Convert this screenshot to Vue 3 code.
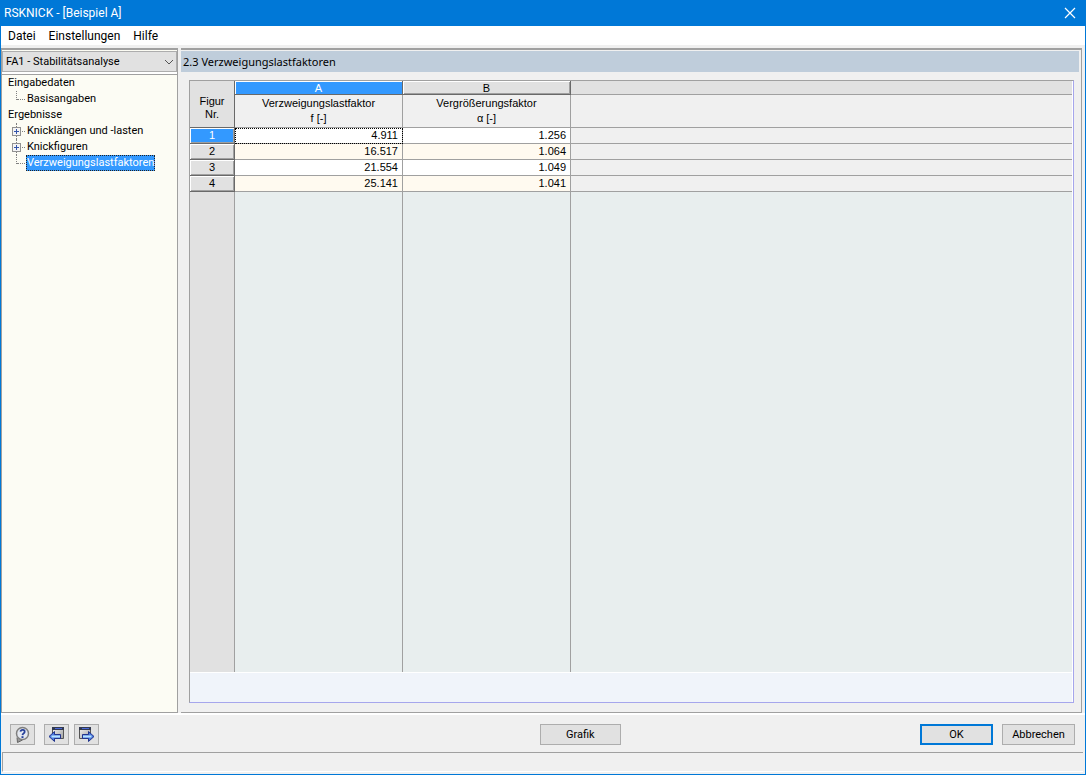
<script setup>
const menus = ['Datei', 'Einstellungen', 'Hilfe']
const rows = [
  ['4.911', '1.256'],
  ['16.517', '1.064'],
  ['21.554', '1.049'],
  ['25.141', '1.041'],
]
</script>

<template>
  <div class="window">
    <header class="titlebar">
      <h1>RSKNICK - [Beispiel A]</h1>
      <button class="close" aria-label="Schließen">
        <svg width="12" height="12" viewBox="0 0 12 12"><path d="M1 1L11 11M11 1L1 11" stroke="#fff" stroke-width="1.2" /></svg>
      </button>
    </header>
    <nav class="menubar">
      <button v-for="m in menus" :key="m">{{ m }}</button>
    </nav>
    <div class="body">
      <aside class="side">
        <div class="combo">
          <select aria-label="Fall">
            <option>FA1 - Stabilitätsanalyse</option>
          </select>
          <svg class="chevron" width="10" height="6" viewBox="0 0 10 6"><path d="M1 1L5 5L9 1" fill="none" stroke="#555" /></svg>
        </div>
        <ul class="tree">
          <li><a href="#">Eingabedaten</a></li>
          <li class="child last"><i class="branch"></i><a href="#">Basisangaben</a></li>
          <li><a href="#">Ergebnisse</a></li>
          <li class="child"><i class="branch"></i><button class="plus" aria-label="Knicklängen öffnen"></button><a href="#">Knicklängen und -lasten</a></li>
          <li class="child"><i class="branch"></i><button class="plus" aria-label="Knickfiguren öffnen"></button><a href="#">Knickfiguren</a></li>
          <li class="child last"><i class="branch"></i><a href="#" class="selected">Verzweigungslastfaktoren</a></li>
        </ul>
      </aside>
      <main class="main">
        <h2>2.3 Verzweigungslastfaktoren</h2>
        <div class="grid">
          <table>
            <colgroup><col class="c-no"><col class="c-val"><col class="c-val"><col></colgroup>
            <thead>
              <tr class="letters">
                <th rowspan="2" class="corner">Figur<br>Nr.</th>
                <th class="active">A</th>
                <th class="letter">B</th>
                <th class="blank"></th>
              </tr>
              <tr class="names">
                <th>Verzweigungslastfaktor<br>f [-]</th>
                <th>Vergrößerungsfaktor<br>α [-]</th>
                <th></th>
              </tr>
            </thead>
            <tbody>
              <tr v-for="(r, i) in rows" :key="i" class="row">
                <th :class="{ current: i === 0 }">{{ i + 1 }}</th>
                <td :class="{ focus: i === 0 }">{{ r[0] }}</td>
                <td>{{ r[1] }}</td>
                <td class="rest"></td>
              </tr>
              <tr class="filler"><th></th><td></td><td></td><td class="rest"></td></tr>
            </tbody>
          </table>
          <div class="note"></div>
        </div>
      </main>
    </div>
    <footer class="actions">
      <div class="tools">
        <button class="tool" aria-label="Hilfe">
          <svg width="18" height="18" viewBox="0 0 18 18">
            <path d="M3 11.500L3.500 16.500L8.500 14" fill="#999" stroke="#666" />
            <circle cx="8.500" cy="7.500" r="6" fill="#e4e8f0" stroke="#808080" stroke-width="1.500" />
            <path d="M6.500 5.700C6.800 3 11.200 3.200 10.600 6C10.300 7.500 8.800 7.300 8.500 9.200" fill="none" stroke="#26409a" stroke-width="1.800" />
            <path d="M7.500 10.200H9.500V12H7.500Z" fill="#26409a" />
          </svg>
        </button>
        <button class="tool gap" aria-label="Vorherige Maske">
          <svg width="18" height="18" viewBox="0 0 18 18">
            <defs><linearGradient id="pane" x2="1" y2="1"><stop stop-color="#f4f4f4" /><stop offset="1" stop-color="#a0a0a0" /></linearGradient></defs>
            <path d="M4.500 1.500H15.500V12.500H4.500Z" fill="url(#pane)" stroke="#555" />
            <path d="M4 1H16V4H4Z" fill="#333a50" /><path d="M7 2H14V3H7Z" fill="#4a68d8" />
            <path d="M1 10.500L6.500 5.500V8.500H12.500V12.500H6.500V15.500Z" fill="#4a7ae0" stroke="#22348c" />
            <path d="M3.500 10.500H12" stroke="#b8e4ff" stroke-width="2" />
          </svg>
        </button>
        <button class="tool" aria-label="Nächste Maske">
          <svg width="18" height="18" viewBox="0 0 18 18">
            <path d="M1.500 1.500H12.500V12.500H1.500Z" fill="url(#pane)" stroke="#555" />
            <path d="M1 1H13V4H1Z" fill="#333a50" /><path d="M4 2H11V3H4Z" fill="#4a68d8" />
            <path d="M16 10.500L10.500 5.500V8.500H4.500V12.500H10.500V15.500Z" fill="#4a7ae0" stroke="#22348c" />
            <path d="M5 10.500H13.500" stroke="#b8e4ff" stroke-width="2" />
          </svg>
        </button>
      </div>
      <button class="btn center">Grafik</button>
      <div class="right">
        <button class="btn ok">OK</button>
        <button class="btn">Abbrechen</button>
      </div>
    </footer>
    <div class="status"></div>
  </div>
</template>

<style>
body { margin: 0; background: #f0f0f0; }
</style>

<style scoped>
.window { box-sizing: border-box; height: 100vh; display: flex; flex-direction: column; background: #f0f0f0; border: 1px solid #0078d7; border-top: 0; font: 11px/16px Roboto, sans-serif; color: #000; }
button, select { font: inherit; color: inherit; padding: 0; margin: 0; border: 0; background: none; border-radius: 0; }
h1, h2 { margin: 0; font-weight: 400; }
a { color: inherit; text-decoration: none; }
.titlebar { flex: none; height: 26px; background: #0078d7; color: #fff; display: flex; align-items: center; justify-content: space-between; padding: 0 9px 0 3px; }
.titlebar h1 { font-size: 12px; }
.close { display: flex; }
.menubar { flex: none; height: 18px; padding: 1px 7px 0; background: #fff; display: flex; gap: 13px; align-items: center; font-size: 12px; }
.body { flex: 1; min-height: 0; display: flex; gap: 3px; margin-top: 3px; padding-right: 3px; border-bottom: 2px solid #fff; }
.side { box-sizing: border-box; width: 177px; border: 1px solid #a0a0a0; border-top-width: 2px; display: flex; flex-direction: column; background: #fcfcf4; }
.combo { position: relative; margin: 1px 0 0; padding-bottom: 2px; background: #fff; border-bottom: 1px solid #a0a0a0; }
.combo select { display: block; box-sizing: border-box; width: 100%; height: 21px; appearance: none; background: #e1e1e1; border: 1px solid #adadad; padding: 0 3px; }
.chevron { position: absolute; right: 3px; top: 8px; }
.tree { list-style: none; margin: 0; padding: 0 0 0 4px; }
.tree li { display: flex; height: 16px; align-items: center; position: relative; padding-left: 1px; }
.tree li.child { padding-left: 20px; }
.tree a { height: 14px; line-height: 14px; border: 1px solid transparent; white-space: nowrap; }
.tree a.selected { background: #3399ff; color: #fff; border: 1px dotted #222; }
.branch { position: absolute; left: 10px; top: 0; width: 9px; height: 16px; border-left: 1px dotted #808080; box-sizing: border-box; }
.branch::after { content: ""; position: absolute; left: 0; right: 0; top: 8px; border-top: 1px dotted #808080; }
.last .branch { height: 9px; }
.plus { position: absolute; left: 6px; top: 4px; box-sizing: content-box; width: 7px; height: 7px; border: 1px solid #919191; background: linear-gradient(#35a, #35a) center / 5px 1px no-repeat, linear-gradient(#35a, #35a) center / 1px 5px no-repeat, #f4f4f4; }
.main { flex: 1; min-width: 0; box-sizing: border-box; display: flex; flex-direction: column; border: 1px solid #a0a0a0; border-left: 0; border-top-width: 2px; padding: 1px 2px 9px 0; }
.main h2 { background: #bfcddb; height: 21px; font: 11px/21px "Noto Sans", sans-serif; padding-left: 2px; }
.grid { flex: 1; min-height: 0; display: flex; flex-direction: column; margin: 8px 5px 0 8px; border: 1px solid #a0a0a0; border-right-color: #a6a6ec; border-bottom-color: #a6a6ec; padding-right: 1px; background: #fff; }
table { flex: 1; width: 100%; display: table; table-layout: fixed; border-collapse: separate; border-spacing: 0; font: 11px/14px "Liberation Sans", sans-serif; height: 590px; }
.c-no { width: 45px; } .c-val { width: 168px; }
th, td { box-sizing: border-box; padding: 0; font-weight: 400; border-right: 1px solid #a0a0a0; border-bottom: 1px solid #a0a0a0; background: #f0f0f0; }
th:last-child, td:last-child { border-right: 0; }
.corner { background: #e1e1e1; border-right-color: #696969; border-bottom-color: #696969; padding-top: 8px; }
.letters { height: 14px; } .letters th { line-height: 12px; }
.letters .corner { line-height: 13px; }
.letters .letter { background: #e1e1e1; border-color: #696969; box-shadow: inset 1px 1px #fff, inset -1px -1px #a0a0a0; }
.letters .active { background: #3399ff; color: #fff; border-color: #696969; box-shadow: inset 1px 1px #fff; }
.letters .blank { background: #e1e1e1; }
.names { height: 33px; } .names th { line-height: 15px; }
.row { height: 16px; }
.row th, .row td { vertical-align: top; line-height: 14px; }
.row th { background: #e1e1e1; border-color: #696969; box-shadow: inset 1px 1px #fff, inset -1px -1px #a0a0a0; }
.row .current { background: #3399ff; color: #fff; }
.row td { background: #fff; text-align: right; padding-right: 4px; }
.row:nth-child(even) td { background: #fffaf0; }
.row .focus { outline: 1px dotted #000; outline-offset: -1px; }
.row td.rest, .row:nth-child(even) td.rest { background: #f0f0f0; }
.filler td { background: #e8eeee; border-bottom: 0; } .filler th { background: #e1e1e1; border-bottom: 0; }
.note { flex: none; height: 29px; background: #f0f4fa; border-top: 1px solid #fff; }
.actions { flex: none; display: grid; grid-template-columns: 7fr 81px 6fr; align-items: center; padding: 9px 10px 7px 9px; }
.tools, .right { display: flex; gap: 5px; }
.right { justify-content: flex-end; gap: 9px; }
.tool, .btn { box-sizing: border-box; height: 21px; background: #e1e1e1; border: 1px solid #adadad; }
.tool { width: 25px; display: flex; align-items: center; justify-content: center; }
.gap { margin-left: 4px; }
.btn { width: 73px; } .center { width: 81px; }
.ok { border: 2px solid #0078d7; }
.status { flex: none; height: 18px; border-top: 1px solid #a0a0a0; border-left: 1px solid #a0a0a0; border-bottom: 1px solid #fff; margin: 0 2px 2px 1px; }
</style>
